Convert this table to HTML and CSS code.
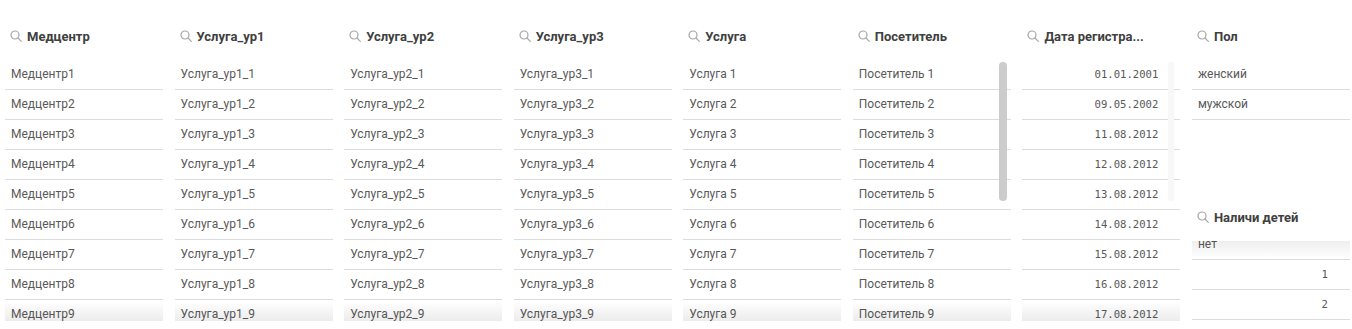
FILE: index.html
```html
<!DOCTYPE html>
<html lang="ru">
<head>
<meta charset="utf-8">
<title>Listboxes</title>
<link rel="stylesheet" href="styles.css">
</head>
<body>
<div class="board">
  <section class="listbox">
    <header class="lb-header"><svg class="lb-icon" viewBox="0 0 12 12"><circle cx="5" cy="5" r="4"/><line x1="8" y1="8" x2="11.3" y2="11.3"/></svg><span>Медцентр</span></header>
    <div class="lb-body fade-bottom">
      <div class="row">Медцентр1</div><div class="row">Медцентр2</div><div class="row">Медцентр3</div><div class="row">Медцентр4</div><div class="row">Медцентр5</div><div class="row">Медцентр6</div><div class="row">Медцентр7</div><div class="row">Медцентр8</div><div class="row">Медцентр9</div>
    </div>
  </section>
  <section class="listbox">
    <header class="lb-header"><svg class="lb-icon" viewBox="0 0 12 12"><circle cx="5" cy="5" r="4"/><line x1="8" y1="8" x2="11.3" y2="11.3"/></svg><span>Услуга_ур1</span></header>
    <div class="lb-body fade-bottom">
      <div class="row">Услуга_ур1_1</div><div class="row">Услуга_ур1_2</div><div class="row">Услуга_ур1_3</div><div class="row">Услуга_ур1_4</div><div class="row">Услуга_ур1_5</div><div class="row">Услуга_ур1_6</div><div class="row">Услуга_ур1_7</div><div class="row">Услуга_ур1_8</div><div class="row">Услуга_ур1_9</div>
    </div>
  </section>
  <section class="listbox">
    <header class="lb-header"><svg class="lb-icon" viewBox="0 0 12 12"><circle cx="5" cy="5" r="4"/><line x1="8" y1="8" x2="11.3" y2="11.3"/></svg><span>Услуга_ур2</span></header>
    <div class="lb-body fade-bottom">
      <div class="row">Услуга_ур2_1</div><div class="row">Услуга_ур2_2</div><div class="row">Услуга_ур2_3</div><div class="row">Услуга_ур2_4</div><div class="row">Услуга_ур2_5</div><div class="row">Услуга_ур2_6</div><div class="row">Услуга_ур2_7</div><div class="row">Услуга_ур2_8</div><div class="row">Услуга_ур2_9</div>
    </div>
  </section>
  <section class="listbox">
    <header class="lb-header"><svg class="lb-icon" viewBox="0 0 12 12"><circle cx="5" cy="5" r="4"/><line x1="8" y1="8" x2="11.3" y2="11.3"/></svg><span>Услуга_ур3</span></header>
    <div class="lb-body fade-bottom">
      <div class="row">Услуга_ур3_1</div><div class="row">Услуга_ур3_2</div><div class="row">Услуга_ур3_3</div><div class="row">Услуга_ур3_4</div><div class="row">Услуга_ур3_5</div><div class="row">Услуга_ур3_6</div><div class="row">Услуга_ур3_7</div><div class="row">Услуга_ур3_8</div><div class="row">Услуга_ур3_9</div>
    </div>
  </section>
  <section class="listbox">
    <header class="lb-header"><svg class="lb-icon" viewBox="0 0 12 12"><circle cx="5" cy="5" r="4"/><line x1="8" y1="8" x2="11.3" y2="11.3"/></svg><span>Услуга</span></header>
    <div class="lb-body fade-bottom">
      <div class="row">Услуга 1</div><div class="row">Услуга 2</div><div class="row">Услуга 3</div><div class="row">Услуга 4</div><div class="row">Услуга 5</div><div class="row">Услуга 6</div><div class="row">Услуга 7</div><div class="row">Услуга 8</div><div class="row">Услуга 9</div>
    </div>
  </section>
  <section class="listbox">
    <header class="lb-header"><svg class="lb-icon" viewBox="0 0 12 12"><circle cx="5" cy="5" r="4"/><line x1="8" y1="8" x2="11.3" y2="11.3"/></svg><span>Посетитель</span></header>
    <div class="lb-body fade-bottom">
      <div class="row">Посетитель 1</div><div class="row">Посетитель 2</div><div class="row">Посетитель 3</div><div class="row">Посетитель 4</div><div class="row">Посетитель 5</div><div class="row">Посетитель 6</div><div class="row">Посетитель 7</div><div class="row">Посетитель 8</div><div class="row">Посетитель 9</div>
      <div class="scrollbar"></div>
    </div>
  </section>
  <section class="listbox">
    <header class="lb-header"><svg class="lb-icon" viewBox="0 0 12 12"><circle cx="5" cy="5" r="4"/><line x1="8" y1="8" x2="11.3" y2="11.3"/></svg><span>Дата регистра...</span></header>
    <div class="lb-body fade-bottom">
      <div class="row num">01.01.2001</div><div class="row num">09.05.2002</div><div class="row num">11.08.2012</div><div class="row num">12.08.2012</div><div class="row num">13.08.2012</div><div class="row num">14.08.2012</div><div class="row num">15.08.2012</div><div class="row num">16.08.2012</div><div class="row num">17.08.2012</div>
      <div class="scrollbar faint"></div>
    </div>
  </section>
  <div class="stack">
    <section class="listbox">
      <header class="lb-header"><svg class="lb-icon" viewBox="0 0 12 12"><circle cx="5" cy="5" r="4"/><line x1="8" y1="8" x2="11.3" y2="11.3"/></svg><span>Пол</span></header>
      <div class="lb-body short">
        <div class="row">женский</div><div class="row">мужской</div>
      </div>
    </section>
    <section class="listbox second">
      <header class="lb-header"><svg class="lb-icon" viewBox="0 0 12 12"><circle cx="5" cy="5" r="4"/><line x1="8" y1="8" x2="11.3" y2="11.3"/></svg><span>Наличи детей</span></header>
      <div class="lb-body tiny fade-top">
        <div class="scrolled">
          <div class="row">нет</div><div class="row num">1</div><div class="row num">2</div>
        </div>
      </div>
    </section>
  </div>
</div>
</body>
</html>
```
FILE: styles.css
```css
html, body {
  margin: 0;
  padding: 0;
  background: #ffffff;
}

body {
  font-family: Roboto, "Noto Sans", sans-serif;
  color: #595959;
  overflow: hidden;
}

.board {
  display: grid;
  grid-template-columns: repeat(8, 158px);
  column-gap: 11.57px;
  padding: 20px 0 0 5px;
  height: 309px;
  overflow: hidden;
}

.listbox {
  display: flex;
  flex-direction: column;
}

.lb-header {
  height: 32px;
  display: flex;
  align-items: center;
  gap: 5px;
  padding-left: 5px;
  font-size: 13px;
  font-weight: 700;
  color: #404040;
  white-space: nowrap;
}

.lb-icon {
  width: 12px;
  height: 12px;
  flex: none;
  fill: none;
  stroke: #a6a6a6;
  stroke-width: 1.2;
  stroke-linecap: round;
}

.lb-body {
  position: relative;
  margin-top: 8px;
  height: 261px;
  overflow: hidden;
}

.lb-body.short {
  height: 121px;
}

.lb-body.tiny {
  height: 80px;
}

.second {
  margin-top: 20px;
}

.row {
  height: 29px;
  line-height: 29px;
  border-bottom: 1px solid #dcdcdc;
  padding: 0 6px;
  font-size: 12px;
  white-space: nowrap;
  overflow: hidden;
}

.row.num {
  text-align: right;
  padding-right: 22px;
  font-family: "DejaVu Sans Mono", "Liberation Mono", monospace;
  font-size: 10.6px;
}

.scrolled {
  margin-top: -11px;
}

.fade-bottom::after {
  content: "";
  position: absolute;
  left: 0;
  right: 0;
  bottom: 0;
  height: 20px;
  background: linear-gradient(rgba(0, 0, 0, 0), rgba(0, 0, 0, 0.075));
  pointer-events: none;
}

.fade-top::before {
  content: "";
  position: absolute;
  left: 0;
  right: 0;
  top: 0;
  height: 18px;
  background: linear-gradient(rgba(0, 0, 0, 0.065), rgba(0, 0, 0, 0));
  pointer-events: none;
}

.scrollbar {
  position: absolute;
  top: 2px;
  right: 4px;
  width: 8px;
  height: 139px;
  border-radius: 4px;
  background: #cccccc;
}

.scrollbar.faint {
  right: 6px;
  width: 6px;
  background: #f7f7f7;
}
```
